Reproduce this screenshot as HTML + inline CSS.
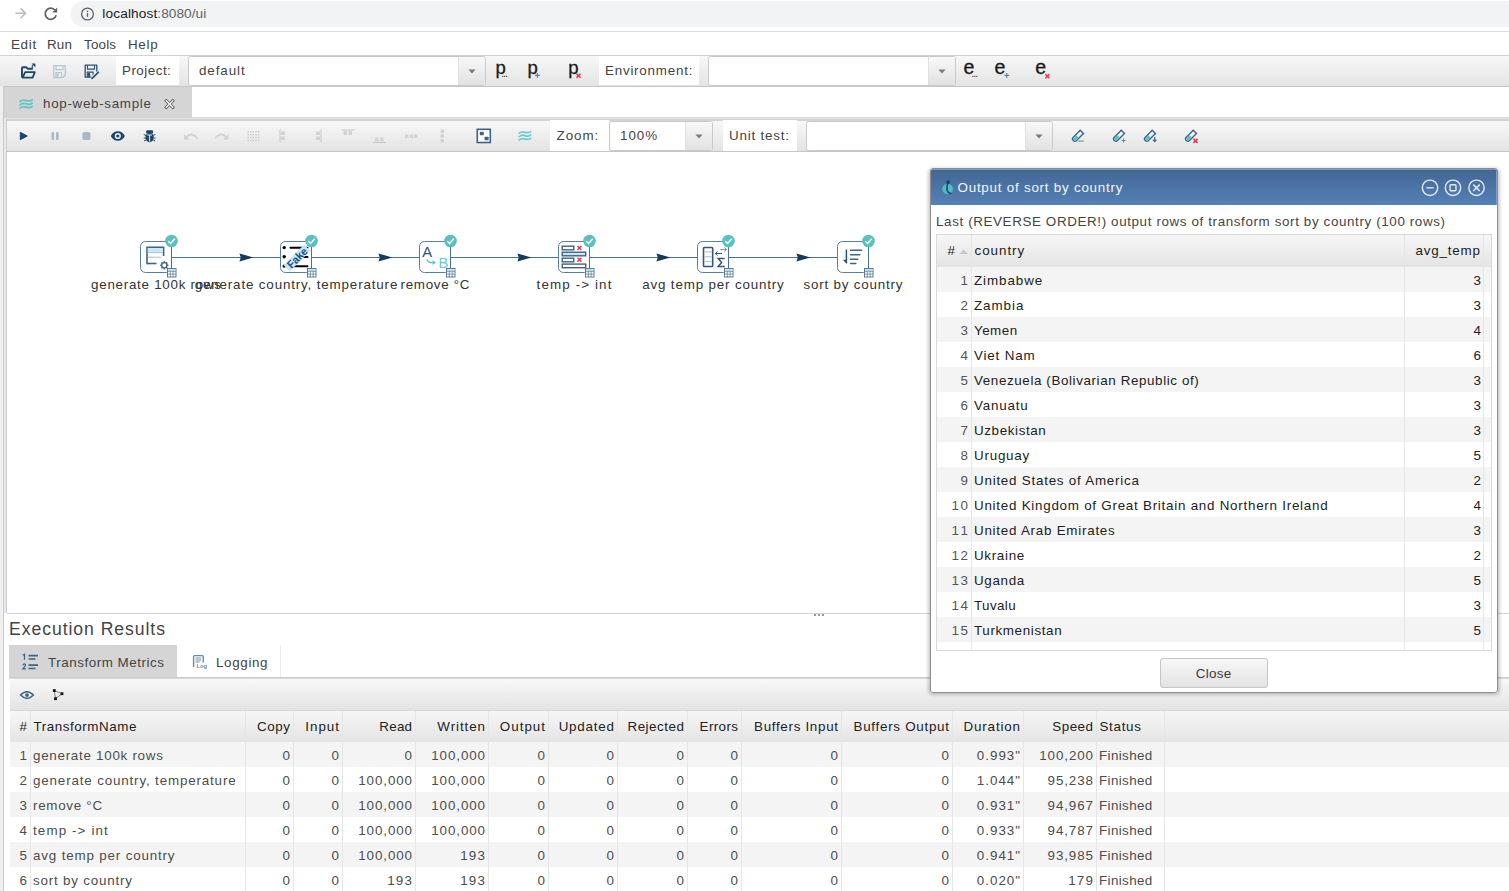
<!DOCTYPE html>
<html><head><meta charset="utf-8"><title>Hop Web</title>
<style>
html,body{margin:0;padding:0;background:#fff;overflow:hidden;}
svg{display:block;font-family:"Liberation Sans",sans-serif;}
</style></head>
<body><svg width="1509" height="891" viewBox="0 0 1509 891">
<defs>
<linearGradient id="tb" x1="0" y1="0" x2="0" y2="1"><stop offset="0" stop-color="#f8f8f8"/><stop offset="1" stop-color="#e3e3e3"/></linearGradient>
<linearGradient id="hd" x1="0" y1="0" x2="0" y2="1"><stop offset="0" stop-color="#f6f6f6"/><stop offset="1" stop-color="#e4e4e4"/></linearGradient>
<linearGradient id="btn" x1="0" y1="0" x2="0" y2="1"><stop offset="0" stop-color="#f8f8f8"/><stop offset="1" stop-color="#e2e2e2"/></linearGradient>
<linearGradient id="ttl" x1="0" y1="0" x2="0" y2="1"><stop offset="0" stop-color="#416693"/><stop offset="1" stop-color="#5581b7"/></linearGradient>
<filter id="shd" x="-5%" y="-5%" width="110%" height="112%"><feGaussianBlur stdDeviation="2"/></filter>
</defs>
<rect x="0" y="0" width="1509" height="891" fill="#ffffff" />
<rect x="0" y="0" width="1509" height="31" fill="#ffffff" />
<rect x="70.5" y="1" width="1500" height="26" rx="13" fill="#f1f3f4"/>
<rect x="0" y="31" width="1509" height="1" fill="#dadce0"/>
<path d="M15.5 13.3 H25.5 M20.5 8.3 L25.5 13.3 L20.5 18.3" stroke="#b9bcbf" stroke-width="1.6" fill="none"/>
<path d="M55.2 10.2 A5.6 5.6 0 1 0 56.2 15.2" stroke="#5f6368" stroke-width="1.7" fill="none"/>
<path d="M57.2 7.4 V12.4 H52.2 Z" fill="#5f6368"/>
<circle cx="87.5" cy="14" r="5.9" stroke="#5f6368" stroke-width="1.3" fill="none"/>
<rect x="86.85" y="13.1" width="1.3" height="3.8" fill="#5f6368"/><rect x="86.85" y="10.6" width="1.3" height="1.4" fill="#5f6368"/>
<text x="102.3" y="18" font-size="13.7" fill="#202124" textLength="55" lengthAdjust="spacing">localhost</text>
<text x="157.3" y="18" font-size="13.7" fill="#5f6368" textLength="49" lengthAdjust="spacing">:8080/ui</text>
<rect x="0" y="32" width="1509" height="23" fill="#ffffff" />
<text x="11" y="48.5" font-size="13.40" fill="#444444" textLength="25.17" lengthAdjust="spacing">Edit</text>
<text x="47" y="48.5" font-size="13.40" fill="#444444" textLength="24.92" lengthAdjust="spacing">Run</text>
<text x="84" y="48.5" font-size="13.40" fill="#444444" textLength="32.02" lengthAdjust="spacing">Tools</text>
<text x="128" y="48.5" font-size="13.40" fill="#444444" textLength="29.64" lengthAdjust="spacing">Help</text>
<rect x="0" y="55" width="1509" height="32" fill="url(#tb)" />
<rect x="0" y="55" width="1509" height="1" fill="#d2d2d2"/>
<rect x="0" y="86" width="1509" height="1" fill="#c6c6c6"/>
<rect x="116" y="56" width="63" height="29" fill="#ffffff" />
<text x="122" y="74.5" font-size="13.40" fill="#444444" textLength="48.84" lengthAdjust="spacing">Project:</text>
<rect x="599" y="56" width="100" height="29" fill="#ffffff" />
<text x="605" y="74.5" font-size="13.40" fill="#444444" textLength="87.36" lengthAdjust="spacing">Environment:</text>
<rect x="188.5" y="56.5" width="297" height="29" rx="2" fill="#ffffff" stroke="#c9c9c9"/>
<path d="M458 57 H483 Q485 57 485 59 V83 Q485 85 483 85 H458 Z" fill="url(#btn)"/>
<rect x="458" y="57" width="1" height="28" fill="#e0e0e0"/>
<path d="M468.4 69.4 H475.6 L472.0 73.6 Z" fill="#7a7a7a"/>
<text x="199" y="75.2" font-size="13.40" fill="#444444" textLength="45.73" lengthAdjust="spacing">default</text>
<rect x="708.5" y="56.5" width="247" height="29" rx="2" fill="#ffffff" stroke="#c9c9c9"/>
<path d="M928 57 H953 Q955 57 955 59 V83 Q955 85 953 85 H928 Z" fill="url(#btn)"/>
<rect x="928" y="57" width="1" height="28" fill="#e0e0e0"/>
<path d="M938.4 69.4 H945.6 L942.0 73.6 Z" fill="#7a7a7a"/>
<rect x="0" y="87" width="1509" height="31" fill="#ffffff" />
<rect x="0" y="86" width="3" height="805" fill="#efefef" />
<rect x="3" y="87" width="1" height="804" fill="#cacaca"/>
<rect x="4" y="119" width="2" height="494" fill="#e9e9e9" />
<rect x="6" y="119" width="1" height="494" fill="#cbcbcb"/>
<rect x="4" y="87" width="188" height="31" fill="#d5d5d5" />
<rect x="192" y="117" width="1317" height="1" fill="#d9d9d9"/>
<rect x="4" y="118" width="1505" height="1" fill="#e4e4e4"/>
<text x="43" y="108" font-size="13.40" fill="#444444" textLength="107.94" lengthAdjust="spacing">hop-web-sample</text>
<path d="M7 125 Q7 121 11 121 H1509 V151 H7 Z" fill="url(#tb)"/>
<rect x="7" y="119" width="1502" height="1" fill="#d3d3d3"/>
<rect x="7" y="120" width="1502" height="1" fill="#d3d3d3"/>
<rect x="7" y="151" width="1502" height="1" fill="#c6c6c6"/>
<rect x="550" y="120" width="59" height="31" fill="#ffffff" />
<text x="556.5" y="139.6" font-size="13.40" fill="#444444" textLength="41.84" lengthAdjust="spacing">Zoom:</text>
<rect x="609.5" y="121.5" width="103" height="29" rx="2" fill="#ffffff" stroke="#c9c9c9"/>
<path d="M685 122 H710 Q712 122 712 124 V148 Q712 150 710 150 H685 Z" fill="url(#btn)"/>
<rect x="685" y="122" width="1" height="28" fill="#e0e0e0"/>
<path d="M695.4 134.4 H702.6 L699.0 138.6 Z" fill="#7a7a7a"/>
<text x="620" y="139.6" font-size="13.40" fill="#444444" textLength="37.16" lengthAdjust="spacing">100%</text>
<rect x="723" y="120" width="74" height="31" fill="#ffffff" />
<text x="729" y="139.6" font-size="13.40" fill="#444444" textLength="59.91" lengthAdjust="spacing">Unit test:</text>
<rect x="806.5" y="121.5" width="246" height="29" rx="2" fill="#ffffff" stroke="#c9c9c9"/>
<path d="M1025 122 H1050 Q1052 122 1052 124 V148 Q1052 150 1050 150 H1025 Z" fill="url(#btn)"/>
<rect x="1025" y="122" width="1" height="28" fill="#e0e0e0"/>
<path d="M1035.4 134.4 H1042.6 L1039.0 138.6 Z" fill="#7a7a7a"/>
<rect x="7" y="152" width="1502" height="461" fill="#ffffff" />
<rect x="7" y="613" width="1502" height="1" fill="#d4d4d4"/>
<rect x="814" y="614" width="2" height="2" fill="#9a9a9a" />
<rect x="818" y="614" width="2" height="2" fill="#9a9a9a" />
<rect x="822" y="614" width="2" height="2" fill="#9a9a9a" />
<rect x="172" y="257" width="108" height="1" fill="#4b7190"/>
<path d="M253.4 257.5 L239.4 253.4 L240.8 257.5 L239.4 261.6 Z" fill="#133b5c"/>
<rect x="312" y="257" width="107" height="1" fill="#4b7190"/>
<path d="M392.4 257.5 L378.4 253.4 L379.79999999999995 257.5 L378.4 261.6 Z" fill="#133b5c"/>
<rect x="451" y="257" width="107" height="1" fill="#4b7190"/>
<path d="M531.4 257.5 L517.4 253.4 L518.8 257.5 L517.4 261.6 Z" fill="#133b5c"/>
<rect x="590" y="257" width="107" height="1" fill="#4b7190"/>
<path d="M670.4 257.5 L656.4 253.4 L657.8 257.5 L656.4 261.6 Z" fill="#133b5c"/>
<rect x="729" y="257" width="108" height="1" fill="#4b7190"/>
<path d="M810.4 257.5 L796.4 253.4 L797.8 257.5 L796.4 261.6 Z" fill="#133b5c"/>
<rect x="140.5" y="241.5" width="31" height="31" rx="5" fill="#ffffff" stroke="#5a7e9d" stroke-width="1"/>
<rect x="280.5" y="241.5" width="31" height="31" rx="5" fill="#ffffff" stroke="#5a7e9d" stroke-width="1"/>
<rect x="419.5" y="241.5" width="31" height="31" rx="5" fill="#ffffff" stroke="#5a7e9d" stroke-width="1"/>
<rect x="558.5" y="241.5" width="31" height="31" rx="5" fill="#ffffff" stroke="#5a7e9d" stroke-width="1"/>
<rect x="697.5" y="241.5" width="31" height="31" rx="5" fill="#ffffff" stroke="#5a7e9d" stroke-width="1"/>
<rect x="837.5" y="241.5" width="31" height="31" rx="5" fill="#ffffff" stroke="#5a7e9d" stroke-width="1"/>
<path d="M147 264.2 V247.3 H163.6 V256" stroke="#3d6385" stroke-width="1.6" fill="none"/>
<rect x="147.8" y="248.1" width="15" height="4" fill="#c8e6f8"/>
<path d="M147.8 252.6 H162.8" stroke="#a9bccb" stroke-width="0.9"/>
<path d="M147.8 257.2 H161.5" stroke="#9fb3c4" stroke-width="0.9"/>
<path d="M147 263.5 H156.5" stroke="#3d6385" stroke-width="1.6"/>
<circle cx="164.3" cy="265.3" r="2.6" fill="none" stroke="#3d6385" stroke-width="1.3"/>
<rect x="167.00" y="264.60" width="1.4" height="1.4" fill="#3d6385"/>
<rect x="166.00" y="267.00" width="1.4" height="1.4" fill="#3d6385"/>
<rect x="163.60" y="268.00" width="1.4" height="1.4" fill="#3d6385"/>
<rect x="161.20" y="267.00" width="1.4" height="1.4" fill="#3d6385"/>
<rect x="160.20" y="264.60" width="1.4" height="1.4" fill="#3d6385"/>
<rect x="161.20" y="262.20" width="1.4" height="1.4" fill="#3d6385"/>
<rect x="163.60" y="261.20" width="1.4" height="1.4" fill="#3d6385"/>
<rect x="166.00" y="262.20" width="1.4" height="1.4" fill="#3d6385"/>
<circle cx="284.2" cy="247.6" r="1.7" fill="#000"/>
<circle cx="284.2" cy="256.8" r="1.7" fill="#000"/>
<circle cx="284.2" cy="266.1" r="1.7" fill="#000"/>
<path d="M290.5 247.8 H307.5 M297 257 H307.5 M291 266.2 H307.5" stroke="#000" stroke-width="2" stroke-linecap="round"/>
<g transform="translate(297,258) rotate(-45)"><rect x="-14.5" y="-4.4" width="29" height="8.8" fill="#c5e5f8"/><text x="0.3" y="3.8" font-size="11" font-weight="bold" fill="#1d5480" text-anchor="middle" font-family="Liberation Sans" textLength="24" lengthAdjust="spacingAndGlyphs">Fake</text></g>
<text x="422.3" y="257.3" font-size="14.8" fill="#2f5577" font-family="Liberation Sans">A</text>
<text x="438.6" y="267.7" font-size="14.8" fill="#6ccaca" font-family="Liberation Sans">B</text>
<path d="M427 259.5 Q428 263.2 433.5 262.6" stroke="#62c3c6" stroke-width="1.3" fill="none"/><path d="M432.5 260.3 L436 262.6 L432.7 265 Z" fill="#62c3c6"/>
<rect x="562.2" y="246.2" width="11.6" height="3.6" fill="#fff" stroke="#3f6384" stroke-width="1.4"/>
<rect x="562.2" y="252.2" width="23.5" height="3.6" fill="#c8e6f8" stroke="#3f6384" stroke-width="1.4"/>
<rect x="562.2" y="258.2" width="11.6" height="3.6" fill="#fff" stroke="#3f6384" stroke-width="1.4"/>
<rect x="562.2" y="264.1" width="23.5" height="3.6" fill="#fff" stroke="#3f6384" stroke-width="1.4"/>
<path d="M577.4 245.9 L581.4 249.9 M581.4 245.9 L577.4 249.9" stroke="#e8334a" stroke-width="1.4"/>
<path d="M577.4 257.8 L581.4 261.8 M581.4 257.8 L577.4 261.8" stroke="#e8334a" stroke-width="1.4"/>
<rect x="703.5" y="247.5" width="9.2" height="19" rx="0.8" fill="#fff" stroke="#34597b" stroke-width="1.6"/>
<path d="M704.5 251.9 H711.8 M704.5 256.8 H711.8 M704.5 261.6 H711.8" stroke="#a9bccb" stroke-width="1"/>
<path d="M720.2 249.5 H726.5 M724.4 247.6 L726.6 249.5 L724.4 251.4" stroke="#7d98ae" stroke-width="1" fill="none"/>
<path d="M722 253.5 H715.3 M717.6 251.5 L715.3 253.5 L717.6 255.5" stroke="#34597b" stroke-width="1" fill="none"/>
<path d="M724.6 258.6 H718.2 L721.6 262.5 L718.2 266.4 H724.8" stroke="#34597b" stroke-width="1.5" fill="none" stroke-linejoin="miter"/>
<path d="M846.4 249.5 V263" stroke="#2b5174" stroke-width="1.5"/><path d="M842.9 259.7 L846.9 259.7 L846.9 264 Z" fill="#2b5174"/>
<path d="M850.5 250.3 H861.6 M850.5 254.7 H859.8 M850.5 259.2 H857.8 M850.5 263.6 H855.8" stroke="#3d6385" stroke-width="1.5" stroke-linecap="round"/>
<text x="156" y="288.6" font-size="13.40" fill="#333333" text-anchor="middle" textLength="129.88" lengthAdjust="spacing">generate 100k rows</text>
<text x="296" y="288.6" font-size="13.40" fill="#333333" text-anchor="middle" textLength="202.66" lengthAdjust="spacing">generate country, temperature</text>
<text x="435" y="288.6" font-size="13.40" fill="#333333" text-anchor="middle" textLength="69.06" lengthAdjust="spacing">remove °C</text>
<text x="574" y="288.6" font-size="13.40" fill="#333333" text-anchor="middle" textLength="74.77" lengthAdjust="spacing">temp -&gt; int</text>
<text x="713" y="288.6" font-size="13.40" fill="#333333" text-anchor="middle" textLength="141.56" lengthAdjust="spacing">avg temp per country</text>
<text x="853" y="288.6" font-size="13.40" fill="#333333" text-anchor="middle" textLength="99.03" lengthAdjust="spacing">sort by country</text>
<rect x="171" y="246" width="1" height="22" fill="#4b7190"/>
<circle cx="171.5" cy="241" r="6.3" fill="#5cbfc0"/>
<path d="M168.3 241.2 L170.6 243.5 L174.8 238.8" stroke="#ffffff" stroke-width="1.4" fill="none"/>
<rect x="167.5" y="268.5" width="8.5" height="8.5" fill="#ffffff" stroke="#4b7190" stroke-width="0.9"/>
<rect x="168.0" y="269.0" width="7.5" height="2" fill="#c5e3f6"/>
<path d="M167.5 271.3 H176.0 M167.5 274.1 H176.0 M170.3 271.3 V277.0 M173.1 271.3 V277.0" stroke="#4b7190" stroke-width="0.7"/>
<rect x="311" y="246" width="1" height="22" fill="#4b7190"/>
<circle cx="311.5" cy="241" r="6.3" fill="#5cbfc0"/>
<path d="M308.3 241.2 L310.6 243.5 L314.8 238.8" stroke="#ffffff" stroke-width="1.4" fill="none"/>
<rect x="307.5" y="268.5" width="8.5" height="8.5" fill="#ffffff" stroke="#4b7190" stroke-width="0.9"/>
<rect x="308.0" y="269.0" width="7.5" height="2" fill="#c5e3f6"/>
<path d="M307.5 271.3 H316.0 M307.5 274.1 H316.0 M310.3 271.3 V277.0 M313.1 271.3 V277.0" stroke="#4b7190" stroke-width="0.7"/>
<rect x="450" y="246" width="1" height="22" fill="#4b7190"/>
<circle cx="450.5" cy="241" r="6.3" fill="#5cbfc0"/>
<path d="M447.3 241.2 L449.6 243.5 L453.8 238.8" stroke="#ffffff" stroke-width="1.4" fill="none"/>
<rect x="446.5" y="268.5" width="8.5" height="8.5" fill="#ffffff" stroke="#4b7190" stroke-width="0.9"/>
<rect x="447.0" y="269.0" width="7.5" height="2" fill="#c5e3f6"/>
<path d="M446.5 271.3 H455.0 M446.5 274.1 H455.0 M449.3 271.3 V277.0 M452.1 271.3 V277.0" stroke="#4b7190" stroke-width="0.7"/>
<rect x="589" y="246" width="1" height="22" fill="#4b7190"/>
<circle cx="589.5" cy="241" r="6.3" fill="#5cbfc0"/>
<path d="M586.3 241.2 L588.6 243.5 L592.8 238.8" stroke="#ffffff" stroke-width="1.4" fill="none"/>
<rect x="585.5" y="268.5" width="8.5" height="8.5" fill="#ffffff" stroke="#4b7190" stroke-width="0.9"/>
<rect x="586.0" y="269.0" width="7.5" height="2" fill="#c5e3f6"/>
<path d="M585.5 271.3 H594.0 M585.5 274.1 H594.0 M588.3 271.3 V277.0 M591.1 271.3 V277.0" stroke="#4b7190" stroke-width="0.7"/>
<rect x="728" y="246" width="1" height="22" fill="#4b7190"/>
<circle cx="728.5" cy="241" r="6.3" fill="#5cbfc0"/>
<path d="M725.3 241.2 L727.6 243.5 L731.8 238.8" stroke="#ffffff" stroke-width="1.4" fill="none"/>
<rect x="724.5" y="268.5" width="8.5" height="8.5" fill="#ffffff" stroke="#4b7190" stroke-width="0.9"/>
<rect x="725.0" y="269.0" width="7.5" height="2" fill="#c5e3f6"/>
<path d="M724.5 271.3 H733.0 M724.5 274.1 H733.0 M727.3 271.3 V277.0 M730.1 271.3 V277.0" stroke="#4b7190" stroke-width="0.7"/>
<rect x="868" y="246" width="1" height="22" fill="#4b7190"/>
<circle cx="868.5" cy="241" r="6.3" fill="#5cbfc0"/>
<path d="M865.3 241.2 L867.6 243.5 L871.8 238.8" stroke="#ffffff" stroke-width="1.4" fill="none"/>
<rect x="864.5" y="268.5" width="8.5" height="8.5" fill="#ffffff" stroke="#4b7190" stroke-width="0.9"/>
<rect x="865.0" y="269.0" width="7.5" height="2" fill="#c5e3f6"/>
<path d="M864.5 271.3 H873.0 M864.5 274.1 H873.0 M867.3 271.3 V277.0 M870.1 271.3 V277.0" stroke="#4b7190" stroke-width="0.7"/>
<text x="9" y="635" font-size="17.60" fill="#444444" textLength="156.00" lengthAdjust="spacing">Execution Results</text>
<rect x="9" y="645" width="168" height="33" fill="#d5d5d5" />
<text x="48" y="666.8" font-size="13.40" fill="#444444" textLength="115.94" lengthAdjust="spacing">Transform Metrics</text>
<rect x="280" y="645" width="1" height="32" fill="#ececec"/>
<text x="216" y="666.6" font-size="13.40" fill="#444444" textLength="51.56" lengthAdjust="spacing">Logging</text>
<rect x="9" y="677" width="1500" height="1" fill="#cdcdcd"/>
<rect x="9" y="678" width="1500" height="1" fill="#d8d8d8"/>
<path d="M10 683 Q10 679 14 679 H1509 V710 H10 Z" fill="url(#tb)"/>
<rect x="10" y="710" width="1499" height="1" fill="#d6d6d6"/>
<rect x="10" y="711" width="1499" height="31" fill="url(#hd)" />
<rect x="10" y="742" width="1499" height="25" fill="#f4f4f4" />
<rect x="10" y="767" width="1499" height="25" fill="#ffffff" />
<rect x="10" y="792" width="1499" height="25" fill="#f4f4f4" />
<rect x="10" y="817" width="1499" height="25" fill="#ffffff" />
<rect x="10" y="842" width="1499" height="25" fill="#f4f4f4" />
<rect x="10" y="867" width="1499" height="25" fill="#ffffff" />
<rect x="30" y="711" width="1" height="180" fill="#e6e6e6"/>
<rect x="245" y="711" width="1" height="180" fill="#e6e6e6"/>
<rect x="293" y="711" width="1" height="180" fill="#e6e6e6"/>
<rect x="342" y="711" width="1" height="180" fill="#e6e6e6"/>
<rect x="415" y="711" width="1" height="180" fill="#e6e6e6"/>
<rect x="488" y="711" width="1" height="180" fill="#e6e6e6"/>
<rect x="548" y="711" width="1" height="180" fill="#e6e6e6"/>
<rect x="617" y="711" width="1" height="180" fill="#e6e6e6"/>
<rect x="687" y="711" width="1" height="180" fill="#e6e6e6"/>
<rect x="741" y="711" width="1" height="180" fill="#e6e6e6"/>
<rect x="841" y="711" width="1" height="180" fill="#e6e6e6"/>
<rect x="952" y="711" width="1" height="180" fill="#e6e6e6"/>
<rect x="1023" y="711" width="1" height="180" fill="#e6e6e6"/>
<rect x="1096" y="711" width="1" height="180" fill="#e6e6e6"/>
<rect x="1164" y="711" width="1" height="180" fill="#e6e6e6"/>
<text x="27" y="731" font-size="13.40" fill="#222222" text-anchor="end">#</text>
<text x="33.5" y="731" font-size="13.40" fill="#222222" textLength="102.98" lengthAdjust="spacing">TransformName</text>
<text x="290" y="731" font-size="13.40" fill="#222222" text-anchor="end" textLength="32.97" lengthAdjust="spacing">Copy</text>
<text x="339" y="731" font-size="13.40" fill="#222222" text-anchor="end" textLength="33.64" lengthAdjust="spacing">Input</text>
<text x="412" y="731" font-size="13.40" fill="#222222" text-anchor="end" textLength="32.67" lengthAdjust="spacing">Read</text>
<text x="485" y="731" font-size="13.40" fill="#222222" text-anchor="end" textLength="47.66" lengthAdjust="spacing">Written</text>
<text x="545" y="731" font-size="13.40" fill="#222222" text-anchor="end" textLength="45.14" lengthAdjust="spacing">Output</text>
<text x="614" y="731" font-size="13.40" fill="#222222" text-anchor="end" textLength="55.33" lengthAdjust="spacing">Updated</text>
<text x="684" y="731" font-size="13.40" fill="#222222" text-anchor="end" textLength="56.55" lengthAdjust="spacing">Rejected</text>
<text x="738" y="731" font-size="13.40" fill="#222222" text-anchor="end" textLength="38.45" lengthAdjust="spacing">Errors</text>
<text x="838" y="731" font-size="13.40" fill="#222222" text-anchor="end" textLength="83.98" lengthAdjust="spacing">Buffers Input</text>
<text x="949" y="731" font-size="13.40" fill="#222222" text-anchor="end" textLength="95.48" lengthAdjust="spacing">Buffers Output</text>
<text x="1020" y="731" font-size="13.40" fill="#222222" text-anchor="end" textLength="56.45" lengthAdjust="spacing">Duration</text>
<text x="1093" y="731" font-size="13.40" fill="#222222" text-anchor="end" textLength="40.75" lengthAdjust="spacing">Speed</text>
<text x="1099.5" y="731" font-size="13.40" fill="#222222" textLength="41.41" lengthAdjust="spacing">Status</text>
<text x="27" y="760" font-size="13.40" fill="#4d4d4d" text-anchor="end">1</text>
<text x="33" y="760" font-size="13.40" fill="#4d4d4d" textLength="129.88" lengthAdjust="spacing">generate 100k rows</text>
<text x="290" y="760" font-size="13.40" fill="#4d4d4d" text-anchor="end">0</text>
<text x="339" y="760" font-size="13.40" fill="#4d4d4d" text-anchor="end">0</text>
<text x="412" y="760" font-size="13.40" fill="#4d4d4d" text-anchor="end">0</text>
<text x="485" y="760" font-size="13.40" fill="#4d4d4d" text-anchor="end" textLength="53.72" lengthAdjust="spacing">100,000</text>
<text x="545" y="760" font-size="13.40" fill="#4d4d4d" text-anchor="end">0</text>
<text x="614" y="760" font-size="13.40" fill="#4d4d4d" text-anchor="end">0</text>
<text x="684" y="760" font-size="13.40" fill="#4d4d4d" text-anchor="end">0</text>
<text x="738" y="760" font-size="13.40" fill="#4d4d4d" text-anchor="end">0</text>
<text x="838" y="760" font-size="13.40" fill="#4d4d4d" text-anchor="end">0</text>
<text x="949" y="760" font-size="13.40" fill="#4d4d4d" text-anchor="end">0</text>
<text x="1020" y="760" font-size="13.40" fill="#4d4d4d" text-anchor="end" textLength="43.17" lengthAdjust="spacing">0.993&quot;</text>
<text x="1093" y="760" font-size="13.40" fill="#4d4d4d" text-anchor="end" textLength="53.72" lengthAdjust="spacing">100,200</text>
<text x="1099" y="760" font-size="13.40" fill="#4d4d4d" textLength="53.23" lengthAdjust="spacing">Finished</text>
<text x="27" y="785" font-size="13.40" fill="#4d4d4d" text-anchor="end">2</text>
<text x="33" y="785" font-size="13.40" fill="#4d4d4d" textLength="202.66" lengthAdjust="spacing">generate country, temperature</text>
<text x="290" y="785" font-size="13.40" fill="#4d4d4d" text-anchor="end">0</text>
<text x="339" y="785" font-size="13.40" fill="#4d4d4d" text-anchor="end">0</text>
<text x="412" y="785" font-size="13.40" fill="#4d4d4d" text-anchor="end" textLength="53.72" lengthAdjust="spacing">100,000</text>
<text x="485" y="785" font-size="13.40" fill="#4d4d4d" text-anchor="end" textLength="53.72" lengthAdjust="spacing">100,000</text>
<text x="545" y="785" font-size="13.40" fill="#4d4d4d" text-anchor="end">0</text>
<text x="614" y="785" font-size="13.40" fill="#4d4d4d" text-anchor="end">0</text>
<text x="684" y="785" font-size="13.40" fill="#4d4d4d" text-anchor="end">0</text>
<text x="738" y="785" font-size="13.40" fill="#4d4d4d" text-anchor="end">0</text>
<text x="838" y="785" font-size="13.40" fill="#4d4d4d" text-anchor="end">0</text>
<text x="949" y="785" font-size="13.40" fill="#4d4d4d" text-anchor="end">0</text>
<text x="1020" y="785" font-size="13.40" fill="#4d4d4d" text-anchor="end" textLength="43.17" lengthAdjust="spacing">1.044&quot;</text>
<text x="1093" y="785" font-size="13.40" fill="#4d4d4d" text-anchor="end" textLength="45.45" lengthAdjust="spacing">95,238</text>
<text x="1099" y="785" font-size="13.40" fill="#4d4d4d" textLength="53.23" lengthAdjust="spacing">Finished</text>
<text x="27" y="810" font-size="13.40" fill="#4d4d4d" text-anchor="end">3</text>
<text x="33" y="810" font-size="13.40" fill="#4d4d4d" textLength="69.06" lengthAdjust="spacing">remove °C</text>
<text x="290" y="810" font-size="13.40" fill="#4d4d4d" text-anchor="end">0</text>
<text x="339" y="810" font-size="13.40" fill="#4d4d4d" text-anchor="end">0</text>
<text x="412" y="810" font-size="13.40" fill="#4d4d4d" text-anchor="end" textLength="53.72" lengthAdjust="spacing">100,000</text>
<text x="485" y="810" font-size="13.40" fill="#4d4d4d" text-anchor="end" textLength="53.72" lengthAdjust="spacing">100,000</text>
<text x="545" y="810" font-size="13.40" fill="#4d4d4d" text-anchor="end">0</text>
<text x="614" y="810" font-size="13.40" fill="#4d4d4d" text-anchor="end">0</text>
<text x="684" y="810" font-size="13.40" fill="#4d4d4d" text-anchor="end">0</text>
<text x="738" y="810" font-size="13.40" fill="#4d4d4d" text-anchor="end">0</text>
<text x="838" y="810" font-size="13.40" fill="#4d4d4d" text-anchor="end">0</text>
<text x="949" y="810" font-size="13.40" fill="#4d4d4d" text-anchor="end">0</text>
<text x="1020" y="810" font-size="13.40" fill="#4d4d4d" text-anchor="end" textLength="43.17" lengthAdjust="spacing">0.931&quot;</text>
<text x="1093" y="810" font-size="13.40" fill="#4d4d4d" text-anchor="end" textLength="45.45" lengthAdjust="spacing">94,967</text>
<text x="1099" y="810" font-size="13.40" fill="#4d4d4d" textLength="53.23" lengthAdjust="spacing">Finished</text>
<text x="27" y="835" font-size="13.40" fill="#4d4d4d" text-anchor="end">4</text>
<text x="33" y="835" font-size="13.40" fill="#4d4d4d" textLength="74.77" lengthAdjust="spacing">temp -&gt; int</text>
<text x="290" y="835" font-size="13.40" fill="#4d4d4d" text-anchor="end">0</text>
<text x="339" y="835" font-size="13.40" fill="#4d4d4d" text-anchor="end">0</text>
<text x="412" y="835" font-size="13.40" fill="#4d4d4d" text-anchor="end" textLength="53.72" lengthAdjust="spacing">100,000</text>
<text x="485" y="835" font-size="13.40" fill="#4d4d4d" text-anchor="end" textLength="53.72" lengthAdjust="spacing">100,000</text>
<text x="545" y="835" font-size="13.40" fill="#4d4d4d" text-anchor="end">0</text>
<text x="614" y="835" font-size="13.40" fill="#4d4d4d" text-anchor="end">0</text>
<text x="684" y="835" font-size="13.40" fill="#4d4d4d" text-anchor="end">0</text>
<text x="738" y="835" font-size="13.40" fill="#4d4d4d" text-anchor="end">0</text>
<text x="838" y="835" font-size="13.40" fill="#4d4d4d" text-anchor="end">0</text>
<text x="949" y="835" font-size="13.40" fill="#4d4d4d" text-anchor="end">0</text>
<text x="1020" y="835" font-size="13.40" fill="#4d4d4d" text-anchor="end" textLength="43.17" lengthAdjust="spacing">0.933&quot;</text>
<text x="1093" y="835" font-size="13.40" fill="#4d4d4d" text-anchor="end" textLength="45.45" lengthAdjust="spacing">94,787</text>
<text x="1099" y="835" font-size="13.40" fill="#4d4d4d" textLength="53.23" lengthAdjust="spacing">Finished</text>
<text x="27" y="860" font-size="13.40" fill="#4d4d4d" text-anchor="end">5</text>
<text x="33" y="860" font-size="13.40" fill="#4d4d4d" textLength="141.56" lengthAdjust="spacing">avg temp per country</text>
<text x="290" y="860" font-size="13.40" fill="#4d4d4d" text-anchor="end">0</text>
<text x="339" y="860" font-size="13.40" fill="#4d4d4d" text-anchor="end">0</text>
<text x="412" y="860" font-size="13.40" fill="#4d4d4d" text-anchor="end" textLength="53.72" lengthAdjust="spacing">100,000</text>
<text x="485" y="860" font-size="13.40" fill="#4d4d4d" text-anchor="end" textLength="24.80" lengthAdjust="spacing">193</text>
<text x="545" y="860" font-size="13.40" fill="#4d4d4d" text-anchor="end">0</text>
<text x="614" y="860" font-size="13.40" fill="#4d4d4d" text-anchor="end">0</text>
<text x="684" y="860" font-size="13.40" fill="#4d4d4d" text-anchor="end">0</text>
<text x="738" y="860" font-size="13.40" fill="#4d4d4d" text-anchor="end">0</text>
<text x="838" y="860" font-size="13.40" fill="#4d4d4d" text-anchor="end">0</text>
<text x="949" y="860" font-size="13.40" fill="#4d4d4d" text-anchor="end">0</text>
<text x="1020" y="860" font-size="13.40" fill="#4d4d4d" text-anchor="end" textLength="43.17" lengthAdjust="spacing">0.941&quot;</text>
<text x="1093" y="860" font-size="13.40" fill="#4d4d4d" text-anchor="end" textLength="45.45" lengthAdjust="spacing">93,985</text>
<text x="1099" y="860" font-size="13.40" fill="#4d4d4d" textLength="53.23" lengthAdjust="spacing">Finished</text>
<text x="27" y="885" font-size="13.40" fill="#4d4d4d" text-anchor="end">6</text>
<text x="33" y="885" font-size="13.40" fill="#4d4d4d" textLength="99.03" lengthAdjust="spacing">sort by country</text>
<text x="290" y="885" font-size="13.40" fill="#4d4d4d" text-anchor="end">0</text>
<text x="339" y="885" font-size="13.40" fill="#4d4d4d" text-anchor="end">0</text>
<text x="412" y="885" font-size="13.40" fill="#4d4d4d" text-anchor="end" textLength="24.80" lengthAdjust="spacing">193</text>
<text x="485" y="885" font-size="13.40" fill="#4d4d4d" text-anchor="end" textLength="24.80" lengthAdjust="spacing">193</text>
<text x="545" y="885" font-size="13.40" fill="#4d4d4d" text-anchor="end">0</text>
<text x="614" y="885" font-size="13.40" fill="#4d4d4d" text-anchor="end">0</text>
<text x="684" y="885" font-size="13.40" fill="#4d4d4d" text-anchor="end">0</text>
<text x="738" y="885" font-size="13.40" fill="#4d4d4d" text-anchor="end">0</text>
<text x="838" y="885" font-size="13.40" fill="#4d4d4d" text-anchor="end">0</text>
<text x="949" y="885" font-size="13.40" fill="#4d4d4d" text-anchor="end">0</text>
<text x="1020" y="885" font-size="13.40" fill="#4d4d4d" text-anchor="end" textLength="43.17" lengthAdjust="spacing">0.020&quot;</text>
<text x="1093" y="885" font-size="13.40" fill="#4d4d4d" text-anchor="end" textLength="24.80" lengthAdjust="spacing">179</text>
<text x="1099" y="885" font-size="13.40" fill="#4d4d4d" textLength="53.23" lengthAdjust="spacing">Finished</text>
<rect x="929" y="169" width="570" height="525" rx="3" fill="#000" opacity="0.30" filter="url(#shd)"/>
<rect x="930" y="168" width="568" height="525" rx="2.5" fill="#ffffff"/>
<path d="M931 205 V171 Q931 169 933 169 H1495 Q1497 169 1497 171 V205 Z" fill="url(#ttl)"/>
<rect x="930.5" y="168.5" width="567" height="524" rx="2.5" fill="none" stroke="#8e8e8e"/>
<rect x="1496" y="171" width="1" height="34" fill="#7f9dc2"/>
<rect x="932" y="169" width="564" height="1" fill="#7a97be"/>
<text x="957.5" y="192" font-size="13.40" fill="#f4f6f9" textLength="164.95" lengthAdjust="spacing">Output of sort by country</text>
<ellipse cx="947.6" cy="188.9" rx="5.4" ry="5.2" fill="#52bdc0"/>
<path d="M948 182.5 Q946.3 186.5 947 190.2 Q947.8 192.6 950.6 193.6" stroke="#164a68" stroke-width="1.6" fill="none" stroke-linecap="round"/>
<circle cx="948.1" cy="181.9" r="1.6" fill="#113d5c"/>
<circle cx="1430" cy="187.8" r="7.7" fill="none" stroke="#e4ebf3" stroke-width="1.4"/>
<path d="M1426.4 187.8 H1433.6" stroke="#e4ebf3" stroke-width="1.4"/>
<circle cx="1453" cy="187.8" r="7.7" fill="none" stroke="#e4ebf3" stroke-width="1.4"/>
<rect x="1450" y="184.8" width="6" height="6" rx="1" fill="none" stroke="#e4ebf3" stroke-width="1.4"/>
<circle cx="1476.5" cy="187.8" r="7.7" fill="none" stroke="#e4ebf3" stroke-width="1.4"/>
<path d="M1473.3 184.6 L1479.7 191 M1479.7 184.6 L1473.3 191" stroke="#e4ebf3" stroke-width="1.5"/>
<text x="936" y="226" font-size="13.40" fill="#444444" textLength="509.00" lengthAdjust="spacing">Last (REVERSE ORDER!) output rows of transform sort by country (100 rows)</text>
<rect x="936.5" y="234.5" width="555" height="416" fill="#ffffff" stroke="#d9d9d9"/>
<rect x="937" y="235" width="554" height="32" fill="url(#hd)" />
<rect x="937" y="267" width="554" height="25" fill="#f4f4f4" />
<rect x="937" y="292" width="554" height="25" fill="#ffffff" />
<rect x="937" y="317" width="554" height="25" fill="#f4f4f4" />
<rect x="937" y="342" width="554" height="25" fill="#ffffff" />
<rect x="937" y="367" width="554" height="25" fill="#f4f4f4" />
<rect x="937" y="392" width="554" height="25" fill="#ffffff" />
<rect x="937" y="417" width="554" height="25" fill="#f4f4f4" />
<rect x="937" y="442" width="554" height="25" fill="#ffffff" />
<rect x="937" y="467" width="554" height="25" fill="#f4f4f4" />
<rect x="937" y="492" width="554" height="25" fill="#ffffff" />
<rect x="937" y="517" width="554" height="25" fill="#f4f4f4" />
<rect x="937" y="542" width="554" height="25" fill="#ffffff" />
<rect x="937" y="567" width="554" height="25" fill="#f4f4f4" />
<rect x="937" y="592" width="554" height="25" fill="#ffffff" />
<rect x="937" y="617" width="554" height="25" fill="#f4f4f4" />
<rect x="937" y="642" width="554" height="8" fill="#ffffff" />
<rect x="971" y="235" width="1" height="415" fill="#e6e6e6"/>
<rect x="1404" y="235" width="1" height="415" fill="#e6e6e6"/>
<rect x="1483" y="235" width="1" height="415" fill="#e6e6e6"/>
<text x="947.5" y="255" font-size="13.40" fill="#222222">#</text>
<path d="M959.5 254 L963.7 249.5 L968 254 Z" fill="#c8c8c8"/>
<text x="974.5" y="255" font-size="13.40" fill="#222222" textLength="49.69" lengthAdjust="spacing">country</text>
<text x="1480" y="255" font-size="13.40" fill="#222222" text-anchor="end" textLength="64.41" lengthAdjust="spacing">avg_temp</text>
<text x="968" y="284.7" font-size="13.40" fill="#555555" text-anchor="end">1</text>
<text x="974" y="284.7" font-size="13.40" fill="#222222" textLength="68.27" lengthAdjust="spacing">Zimbabwe</text>
<text x="1481" y="284.7" font-size="13.40" fill="#222222" text-anchor="end">3</text>
<text x="968" y="309.7" font-size="13.40" fill="#555555" text-anchor="end">2</text>
<text x="974" y="309.7" font-size="13.40" fill="#222222" textLength="49.36" lengthAdjust="spacing">Zambia</text>
<text x="1481" y="309.7" font-size="13.40" fill="#222222" text-anchor="end">3</text>
<text x="968" y="334.7" font-size="13.40" fill="#555555" text-anchor="end">3</text>
<text x="974" y="334.7" font-size="13.40" fill="#222222" textLength="43.11" lengthAdjust="spacing">Yemen</text>
<text x="1481" y="334.7" font-size="13.40" fill="#222222" text-anchor="end">4</text>
<text x="968" y="359.7" font-size="13.40" fill="#555555" text-anchor="end">4</text>
<text x="974" y="359.7" font-size="13.40" fill="#222222" textLength="60.63" lengthAdjust="spacing">Viet Nam</text>
<text x="1481" y="359.7" font-size="13.40" fill="#222222" text-anchor="end">6</text>
<text x="968" y="384.7" font-size="13.40" fill="#555555" text-anchor="end">5</text>
<text x="974" y="384.7" font-size="13.40" fill="#222222" textLength="224.82" lengthAdjust="spacing">Venezuela (Bolivarian Republic of)</text>
<text x="1481" y="384.7" font-size="13.40" fill="#222222" text-anchor="end">3</text>
<text x="968" y="409.7" font-size="13.40" fill="#555555" text-anchor="end">6</text>
<text x="974" y="409.7" font-size="13.40" fill="#222222" textLength="53.61" lengthAdjust="spacing">Vanuatu</text>
<text x="1481" y="409.7" font-size="13.40" fill="#222222" text-anchor="end">3</text>
<text x="968" y="434.7" font-size="13.40" fill="#555555" text-anchor="end">7</text>
<text x="974" y="434.7" font-size="13.40" fill="#222222" textLength="71.80" lengthAdjust="spacing">Uzbekistan</text>
<text x="1481" y="434.7" font-size="13.40" fill="#222222" text-anchor="end">3</text>
<text x="968" y="459.7" font-size="13.40" fill="#555555" text-anchor="end">8</text>
<text x="974" y="459.7" font-size="13.40" fill="#222222" textLength="55.23" lengthAdjust="spacing">Uruguay</text>
<text x="1481" y="459.7" font-size="13.40" fill="#222222" text-anchor="end">5</text>
<text x="968" y="484.7" font-size="13.40" fill="#555555" text-anchor="end">9</text>
<text x="974" y="484.7" font-size="13.40" fill="#222222" textLength="164.94" lengthAdjust="spacing">United States of America</text>
<text x="1481" y="484.7" font-size="13.40" fill="#222222" text-anchor="end">2</text>
<text x="968" y="509.7" font-size="13.40" fill="#555555" text-anchor="end" textLength="16.53" lengthAdjust="spacing">10</text>
<text x="974" y="509.7" font-size="13.40" fill="#222222" textLength="353.62" lengthAdjust="spacing">United Kingdom of Great Britain and Northern Ireland</text>
<text x="1481" y="509.7" font-size="13.40" fill="#222222" text-anchor="end">4</text>
<text x="968" y="534.7" font-size="13.40" fill="#555555" text-anchor="end" textLength="16.53" lengthAdjust="spacing">11</text>
<text x="974" y="534.7" font-size="13.40" fill="#222222" textLength="140.76" lengthAdjust="spacing">United Arab Emirates</text>
<text x="1481" y="534.7" font-size="13.40" fill="#222222" text-anchor="end">3</text>
<text x="968" y="559.7" font-size="13.40" fill="#555555" text-anchor="end" textLength="16.53" lengthAdjust="spacing">12</text>
<text x="974" y="559.7" font-size="13.40" fill="#222222" textLength="50.20" lengthAdjust="spacing">Ukraine</text>
<text x="1481" y="559.7" font-size="13.40" fill="#222222" text-anchor="end">2</text>
<text x="968" y="584.7" font-size="13.40" fill="#555555" text-anchor="end" textLength="16.53" lengthAdjust="spacing">13</text>
<text x="974" y="584.7" font-size="13.40" fill="#222222" textLength="50.19" lengthAdjust="spacing">Uganda</text>
<text x="1481" y="584.7" font-size="13.40" fill="#222222" text-anchor="end">5</text>
<text x="968" y="609.7" font-size="13.40" fill="#555555" text-anchor="end" textLength="16.53" lengthAdjust="spacing">14</text>
<text x="974" y="609.7" font-size="13.40" fill="#222222" textLength="41.70" lengthAdjust="spacing">Tuvalu</text>
<text x="1481" y="609.7" font-size="13.40" fill="#222222" text-anchor="end">3</text>
<text x="968" y="634.7" font-size="13.40" fill="#555555" text-anchor="end" textLength="16.53" lengthAdjust="spacing">15</text>
<text x="974" y="634.7" font-size="13.40" fill="#222222" textLength="87.64" lengthAdjust="spacing">Turkmenistan</text>
<text x="1481" y="634.7" font-size="13.40" fill="#222222" text-anchor="end">5</text>
<rect x="1160.5" y="658.5" width="107" height="29" rx="2.5" fill="url(#btn)" stroke="#c6c6c6"/>
<text x="1213.5" y="678" font-size="13.40" fill="#3a3a3a" text-anchor="middle" textLength="35.41" lengthAdjust="spacing">Close</text>
<path d="M22 77.6 V68.2 Q22 67.3 22.9 67.3 H26.4 L27.9 68.8 H32.8" stroke="#1c4668" stroke-width="1.9" fill="none" stroke-linejoin="round"/>
<path d="M22.6 77.6 L25.2 72.2 H34.8 L32.6 77.6 Z" stroke="#1c4668" stroke-width="1.8" fill="none" stroke-linejoin="round"/>
<path d="M32.3 68.5 V65" stroke="#1c4668" stroke-width="1.1"/><path d="M31.6 63.6 H35.4 V67.4 Z" fill="#1c4668"/>
<path d="M53.7 65.7 H65.3 V75 L62.6 77.7 H53.7 Z" stroke="#b8c7d4" stroke-width="1.3" fill="none" stroke-linejoin="round"/>
<path d="M56 66 V69.6 H63 V66" stroke="#b8c7d4" stroke-width="1.1" fill="none"/>
<path d="M55.8 77.4 V72.6 H61.6 V77.4" stroke="#b8c7d4" stroke-width="1.1" fill="none"/>
<rect x="56.4" y="73.4" width="2.2" height="4" fill="#b8c7d4"/>
<path d="M85.2 65.2 H96.8 V74.5 L94.1 77.2 H85.2 Z" stroke="#2a5274" stroke-width="1.3" fill="none" stroke-linejoin="round"/>
<path d="M87.5 65.5 V69.1 H94.5 V65.5" stroke="#2a5274" stroke-width="1.1" fill="none"/>
<path d="M87.3 76.9 V72.1 H93.1 V76.9" stroke="#2a5274" stroke-width="1.1" fill="none"/>
<rect x="87.9" y="72.9" width="2.2" height="4" fill="#2a5274"/>
<path d="M92.1 78.3 L98.3 72.3" stroke="#f2f2f2" stroke-width="3.4"/>
<path d="M92.1 78.3 L98.3 72.3" stroke="#2a5274" stroke-width="1.8" stroke-linecap="round"/>
<rect x="90" y="72" width="8" height="3" fill="#f0f0f0" opacity="0"/>
<text x="495.6" y="74.0" font-size="18.5" fill="#1a1a1a" stroke="#1a1a1a" stroke-width="0.3" font-family="Liberation Sans">p</text>
<rect x="502.2" y="75.8" width="1.2" height="1.2" fill="#555"/>
<rect x="504.09999999999997" y="75.8" width="1.2" height="1.2" fill="#555"/>
<rect x="506.0" y="75.8" width="1.2" height="1.2" fill="#555"/>
<text x="527.5" y="74.0" font-size="18.5" fill="#1a1a1a" stroke="#1a1a1a" stroke-width="0.3" font-family="Liberation Sans">p</text>
<path d="M534.9 75.4 H539.9 M537.4 72.9 V77.9" stroke="#5a7fa0" stroke-width="1.1"/>
<text x="568.3" y="74.0" font-size="18.5" fill="#1a1a1a" stroke="#1a1a1a" stroke-width="0.3" font-family="Liberation Sans">p</text>
<path d="M576.5 73.8 L580.5 77.8 M580.5 73.8 L576.5 77.8" stroke="#e8334a" stroke-width="1.6"/>
<text x="963.4" y="74.4" font-size="19.6" fill="#1a1a1a" stroke="#1a1a1a" stroke-width="0.3" font-family="Liberation Sans">e</text>
<rect x="972.3" y="75.8" width="1.2" height="1.2" fill="#555"/>
<rect x="974.1999999999999" y="75.8" width="1.2" height="1.2" fill="#555"/>
<rect x="976.0999999999999" y="75.8" width="1.2" height="1.2" fill="#555"/>
<text x="994.6" y="74.4" font-size="19.6" fill="#1a1a1a" stroke="#1a1a1a" stroke-width="0.3" font-family="Liberation Sans">e</text>
<path d="M1004.3 75.4 H1009.3 M1006.8 72.9 V77.9" stroke="#5a7fa0" stroke-width="1.1"/>
<text x="1035.3" y="74.4" font-size="19.6" fill="#1a1a1a" stroke="#1a1a1a" stroke-width="0.3" font-family="Liberation Sans">e</text>
<path d="M1045.4 74.3 L1049.4 78.3 M1049.4 74.3 L1045.4 78.3" stroke="#e8334a" stroke-width="1.6"/>
<path d="M20 101.5 Q23.05 99.3 26.1 100.5 T32.2 99.9" stroke="#62c3c6" stroke-width="1.7" fill="none" stroke-linecap="round"/>
<path d="M20 104.8 Q23.05 102.6 26.1 103.8 T32.2 103.2" stroke="#62c3c6" stroke-width="1.7" fill="none" stroke-linecap="round"/>
<path d="M20 108.1 Q23.05 105.89999999999999 26.1 107.1 T32.2 106.5" stroke="#62c3c6" stroke-width="1.7" fill="none" stroke-linecap="round"/>
<path d="M166.3 100.8 L172.8 107.3 M172.8 100.8 L166.3 107.3" stroke="#5a5a5a" stroke-width="3" stroke-linecap="square"/>
<path d="M166.3 100.8 L172.8 107.3 M172.8 100.8 L166.3 107.3" stroke="#ffffff" stroke-width="1.3" stroke-linecap="square"/>
<path d="M20.3 132.3 L27.3 136 L20.3 139.7 Z" fill="#1c4668" stroke="#1c4668" stroke-width="1" stroke-linejoin="round"/>
<rect x="51.5" y="132" width="2.6" height="8" rx="1" fill="#a9b9c7"/><rect x="56" y="132" width="2.6" height="8" rx="1" fill="#a9b9c7"/>
<rect x="82.5" y="132" width="8" height="8" rx="1.6" fill="#a9b9c7"/>
<path d="M110.8 136 C113.2 129.6 122.4 129.6 124.8 136 C122.4 142.4 113.2 142.4 110.8 136 Z" fill="#1c4668"/>
<circle cx="117.8" cy="136" r="3.1" fill="#eeeeee"/><circle cx="117.8" cy="136" r="1.6" fill="#1c4668"/>
<path d="M146.2 133.4 V131.2 Q146.2 130.2 147.2 130.2 H152 Q153 130.2 153 131.2 V133.4 Z" fill="#1c4668"/>
<ellipse cx="149.6" cy="137.6" rx="4.2" ry="4.6" fill="#1c4668"/>
<path d="M143.8 134.5 L146 135.5 M143.8 138 H145.5 M144 141 L146 140 M155.4 134.5 L153.2 135.5 M155.4 138 H153.7 M155.2 141 L153.2 140" stroke="#1c4668" stroke-width="1"/>
<path d="M147.3 135 H151.9 M149.6 135 V141.5" stroke="#eeeeee" stroke-width="1"/>
<path d="M184 134 V139.5 H189.5 Z" fill="#d3d3d3"/><path d="M186 137.5 Q191.5 131 197.5 138.5" stroke="#d3d3d3" stroke-width="1.8" fill="none"/>
<path d="M228.5 134 V139.5 H223 Z" fill="#d3d3d3"/><path d="M226.5 137.5 Q221 131 215 138.5" stroke="#d3d3d3" stroke-width="1.8" fill="none"/>
<rect x="247.5" y="131.0" width="1.4" height="1.4" fill="#c9c9c9"/>
<rect x="250.1" y="131.0" width="1.4" height="1.4" fill="#c9c9c9"/>
<rect x="252.7" y="131.0" width="1.4" height="1.4" fill="#c9c9c9"/>
<rect x="255.3" y="131.0" width="1.4" height="1.4" fill="#c9c9c9"/>
<rect x="257.9" y="131.0" width="1.4" height="1.4" fill="#c9c9c9"/>
<rect x="247.5" y="133.9" width="1.4" height="1.4" fill="#c9c9c9"/>
<rect x="250.1" y="133.9" width="1.4" height="1.4" fill="#c9c9c9"/>
<rect x="252.7" y="133.9" width="1.4" height="1.4" fill="#c9c9c9"/>
<rect x="255.3" y="133.9" width="1.4" height="1.4" fill="#c9c9c9"/>
<rect x="257.9" y="133.9" width="1.4" height="1.4" fill="#c9c9c9"/>
<rect x="247.5" y="136.8" width="1.4" height="1.4" fill="#c9c9c9"/>
<rect x="250.1" y="136.8" width="1.4" height="1.4" fill="#c9c9c9"/>
<rect x="252.7" y="136.8" width="1.4" height="1.4" fill="#c9c9c9"/>
<rect x="255.3" y="136.8" width="1.4" height="1.4" fill="#c9c9c9"/>
<rect x="257.9" y="136.8" width="1.4" height="1.4" fill="#c9c9c9"/>
<rect x="247.5" y="139.7" width="1.4" height="1.4" fill="#c9c9c9"/>
<rect x="250.1" y="139.7" width="1.4" height="1.4" fill="#c9c9c9"/>
<rect x="252.7" y="139.7" width="1.4" height="1.4" fill="#c9c9c9"/>
<rect x="255.3" y="139.7" width="1.4" height="1.4" fill="#c9c9c9"/>
<rect x="257.9" y="139.7" width="1.4" height="1.4" fill="#c9c9c9"/>
<rect x="279.5" y="129.5" width="1" height="13" fill="#c6c6c6"/><rect x="281" y="131.5" width="4" height="3.5" fill="#d3d3d3"/><rect x="281" y="136.5" width="4" height="3.5" fill="#d3d3d3"/>
<rect x="320.5" y="129.5" width="1" height="13" fill="#c6c6c6"/><rect x="316" y="131.5" width="4" height="3.5" fill="#d3d3d3"/><rect x="316" y="136.5" width="4" height="3.5" fill="#d3d3d3"/>
<rect x="341.5" y="129.5" width="13" height="1" fill="#c6c6c6"/><rect x="343.5" y="131" width="3.5" height="4" fill="#d3d3d3"/><rect x="348.5" y="131" width="3.5" height="4" fill="#d3d3d3"/>
<rect x="373" y="142" width="13" height="1" fill="#c6c6c6"/><rect x="375" y="137.5" width="3.5" height="4" fill="#d3d3d3"/><rect x="380" y="137.5" width="3.5" height="4" fill="#d3d3d3"/>
<rect x="405" y="134.5" width="3.5" height="3.5" fill="#d3d3d3"/><rect x="409.5" y="134.5" width="3.5" height="3.5" fill="#d3d3d3"/><rect x="414" y="134.5" width="3.5" height="3.5" fill="#d3d3d3"/>
<rect x="440.5" y="129.5" width="3.5" height="3.5" fill="#d3d3d3"/><rect x="440.5" y="134.3" width="3.5" height="3.5" fill="#d3d3d3"/><rect x="440.5" y="139" width="3.5" height="3.5" fill="#d3d3d3"/>
<rect x="477.3" y="129.3" width="13" height="13.2" fill="#ffffff" stroke="#3d6385" stroke-width="1.6"/>
<rect x="479.8" y="131.8" width="4" height="3.5" rx="0.6" fill="#3d6385"/><rect x="484.6" y="136.7" width="4" height="3.6" rx="0.6" fill="#3d6385"/>
<path d="M519.2 133.2 Q522.075 131.0 524.95 132.2 T530.7 131.6" stroke="#6ccccc" stroke-width="1.7" fill="none" stroke-linecap="round"/>
<path d="M519.2 136.6 Q522.075 134.4 524.95 135.6 T530.7 135.0" stroke="#6ccccc" stroke-width="1.7" fill="none" stroke-linecap="round"/>
<path d="M519.2 140.0 Q522.075 137.8 524.95 139.0 T530.7 138.4" stroke="#6ccccc" stroke-width="1.7" fill="none" stroke-linecap="round"/>
<g transform="translate(1077.5,136.3) rotate(45) scale(0.88)"><path d="M-2.6 -7 V4.2 A2.6 2.6 0 0 0 2.6 4.2 V-7" stroke="#3d6385" stroke-width="1.5" fill="none"/><path d="M-1.9 0 V4.2 A1.9 1.9 0 0 0 1.9 4.2 V0 Z" fill="#5ec0c8"/><path d="M-3.4 -7 H3.4" stroke="#3d6385" stroke-width="1.5"/></g>
<rect x="1078.5" y="140.5" width="1.2" height="1.2" fill="#3d6385"/>
<rect x="1080.4" y="140.5" width="1.2" height="1.2" fill="#3d6385"/>
<rect x="1082.3" y="140.5" width="1.2" height="1.2" fill="#3d6385"/>
<g transform="translate(1118.5,136.3) rotate(45) scale(0.88)"><path d="M-2.6 -7 V4.2 A2.6 2.6 0 0 0 2.6 4.2 V-7" stroke="#3d6385" stroke-width="1.5" fill="none"/><path d="M-1.9 0 V4.2 A1.9 1.9 0 0 0 1.9 4.2 V0 Z" fill="#5ec0c8"/><path d="M-3.4 -7 H3.4" stroke="#3d6385" stroke-width="1.5"/></g>
<path d="M1121.5 140.5 H1125.5 M1123.5 138.5 V142.5" stroke="#6a8aa5" stroke-width="1.1"/>
<g transform="translate(1149.5,136.3) rotate(45) scale(0.88)"><path d="M-2.6 -7 V4.2 A2.6 2.6 0 0 0 2.6 4.2 V-7" stroke="#3d6385" stroke-width="1.5" fill="none"/><path d="M-1.9 0 V4.2 A1.9 1.9 0 0 0 1.9 4.2 V0 Z" fill="#5ec0c8"/><path d="M-3.4 -7 H3.4" stroke="#3d6385" stroke-width="1.5"/></g>
<path d="M1154.7 137 V140.5" stroke="#3d6385" stroke-width="1.2"/><path d="M1152.3 139.8 H1157.1 L1154.7 142.6 Z" fill="#3d6385"/>
<g transform="translate(1190.5,136.3) rotate(45) scale(0.88)"><path d="M-2.6 -7 V4.2 A2.6 2.6 0 0 0 2.6 4.2 V-7" stroke="#3d6385" stroke-width="1.5" fill="none"/><path d="M-1.9 0 V4.2 A1.9 1.9 0 0 0 1.9 4.2 V0 Z" fill="#5ec0c8"/><path d="M-3.4 -7 H3.4" stroke="#3d6385" stroke-width="1.5"/></g>
<path d="M1193.4 138.70000000000002 L1197.6 142.9 M1197.6 138.70000000000002 L1193.4 142.9" stroke="#e8334a" stroke-width="1.6"/>
<path d="M22.8 655.3 L24.5 654.4 V659.8" stroke="#3d6385" stroke-width="1.3" fill="none"/>
<path d="M28.5 655.6 H38 M28.5 659 H35.5 M28.5 665.2 H38 M28.5 668.5 H35.5" stroke="#3d6385" stroke-width="1.7"/>
<path d="M22.9 665.2 Q23.3 663.9 24.4 663.9 Q25.9 664.2 25.3 665.8 L22.9 668.8 H26" stroke="#3d6385" stroke-width="1.2" fill="none"/>
<path d="M193.6 667 V656.4 Q193.6 655.6 194.4 655.6 H202.4 Q203.2 655.6 203.2 656.4 V662.5" stroke="#6a8aa5" stroke-width="1.4" fill="none"/>
<path d="M195.6 658 H201.2 M195.6 660 H201.2 M195.6 662 H199.5" stroke="#6a8aa5" stroke-width="1"/>
<text x="196.4" y="668" font-size="5.8" font-weight="bold" fill="#6a8aa5" font-family="Liberation Sans">Log</text>
<path d="M20.6 695.1 Q27 688.2 33.4 695.1 Q27 702 20.6 695.1 Z" stroke="#3d6385" stroke-width="1.5" fill="none"/>
<circle cx="27" cy="695.1" r="1.9" fill="#3d6385"/>
<path d="M54.3 690.6 L62 693.7 L55.5 698.7 Z" stroke="#333" stroke-width="0.6" fill="none"/>
<rect x="52.9" y="689.2" width="2.8" height="2.8" fill="#111"/>
<rect x="60.6" y="692.3000000000001" width="2.8" height="2.8" fill="#111"/>
<rect x="54.1" y="697.3000000000001" width="2.8" height="2.8" fill="#111"/>
</svg></body></html>
